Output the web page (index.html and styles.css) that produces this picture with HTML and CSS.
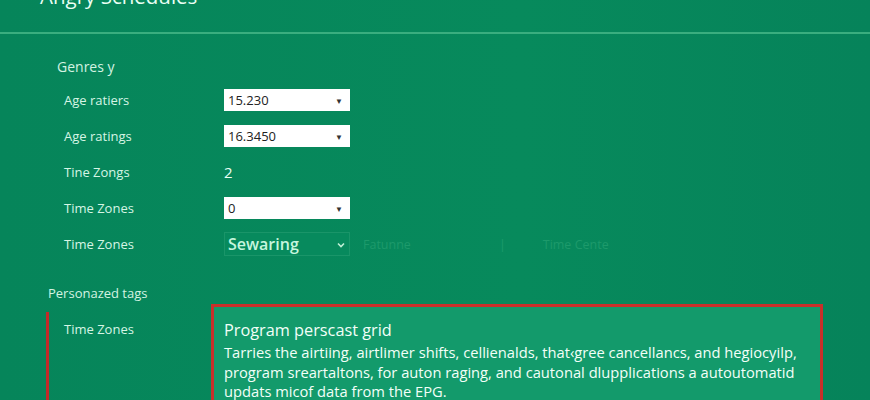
FILE: index.html
```html
<!DOCTYPE html>
<html lang="en">
<head>
    <meta charset="UTF-8"/>
    <meta name="viewport" content="width=device-width, initial-scale=1.0"/>
    <title>Angry Schedules</title>
    <link rel="stylesheet" href="styles.css">
</head>
<body>
<div id="app">
    <div class="header">
        <h1>Angry Schedules</h1>
    </div>

    <div class="section-title genres">Genres y</div>

    <div class="form">
        <div class="label">Age ratiers</div>
        <div class="select"><span>15.230</span><i class="caret">&#9660;</i></div>

        <div class="label">Age ratings</div>
        <div class="select"><span>16.3450</span><i class="caret">&#9660;</i></div>

        <div class="label">Tine Zongs</div>
        <div class="value">2</div>

        <div class="label">Time Zones</div>
        <div class="select"><span>0</span><i class="caret">&#9660;</i></div>

        <div class="label">Time Zones</div>
        <div class="inline">
            <div class="select dark">
                <span>Sewaring</span>
                <svg class="chevron" width="8" height="6" viewBox="0 0 8 6">
                    <path d="M1 1.5 L4 4.5 L7 1.5" fill="none" stroke="#bff0d6" stroke-width="1.6"/>
                </svg>
            </div>
            <span class="faint">Fatunne</span>
            <span class="faint sep">|</span>
            <span class="faint">Time Cente</span>
        </div>
    </div>

    <div class="section-title tags">Personazed tags</div>

    <div class="tags-block">
        <div class="label">Time Zones</div>
        <div class="card">
            <div class="card-title">Program perscast grid</div>
            <p>Tarries the airtiing, airtlimer shifts, cellienalds, that&lsaquo;gree cancellancs, and hegiocyilp,<br>
                program sreartaltons, for auton raging, and cautonal dlupplications a autoutomatid<br>
                updats micof data from the EPG.</p>
        </div>
    </div>
</div>
</body>
</html>
```

FILE: styles.css
```css
body {
    margin: 0;
    padding: 0;
    font-family: "Open Sans", "Noto Sans", sans-serif;
    background: linear-gradient(90deg, #06855a 0%, #078a5c 60%, #06835a 100%);
    color: #d3f3e2;
    height: 400px;
    overflow: hidden;
}

#app {
    height: 400px;
}

.header {
    height: 32px;
    border-bottom: 2px solid #3aae7f;
    padding-left: 40px;
    overflow: hidden;
}

.header h1 {
    margin: -15px 0 0;
    font-size: 20.5px;
    font-weight: 400;
    line-height: 22px;
    color: #eafff4;
}

.section-title {
    font-size: 13px;
    line-height: 20px;
}

.genres {
    font-size: 14px;
    padding: 23px 0 0 57px;
}

.form {
    display: grid;
    grid-template-columns: 160px 1fr;
    grid-auto-rows: 36px;
    align-items: center;
    padding: 5px 0 0 64px;
    font-size: 13px;
}

.label {
    color: #d6f5e5;
}

.select {
    box-sizing: border-box;
    width: 126px;
    height: 22px;
    background: #fff;
    color: #222;
    font-size: 13px;
    padding: 0 7px 0 4px;
    display: flex;
    align-items: center;
    justify-content: space-between;
}

.caret {
    font-style: normal;
    font-size: 8px;
    color: #333;
}

.value {
    color: #eafff4;
    font-size: 15px;
}

.inline {
    display: flex;
    align-items: center;
}

.select.dark {
    height: 24px;
    background: #078a5d;
    border: 1px solid #1a9569;
    color: #c6f6de;
    font-size: 16px;
    font-weight: 600;
    padding: 0 4px 0 3px;
}

.chevron {
    margin-top: 1px;
}

.faint {
    color: #1d9a6b;
    font-size: 12.5px;
    margin-left: 13px;
}

.faint.sep {
    margin-left: 88px;
    margin-right: 24px;
}

.tags {
    padding: 21px 0 0 48px;
}

.tags-block {
    display: flex;
    align-items: flex-start;
    margin: 9px 0 0 46px;
    border-left: 3px solid #c22a28;
    height: 100px;
    padding-left: 15px;
    font-size: 13px;
}

.tags-block .label {
    width: 147px;
    padding-top: 8px;
}

.card {
    box-sizing: border-box;
    width: 612px;
    margin-top: -8px;
    border: 3px solid #c9302a;
    border-bottom: none;
    background: #139a6b;
    padding: 12px 10px 0 10px;
    height: 120px;
    color: #f2fff8;
}

.card-title {
    font-size: 16.3px;
    line-height: 22px;
}

.card p {
    margin: 2px 0 0;
    font-size: 14.7px;
    line-height: 19.5px;
    white-space: nowrap;
}
```
